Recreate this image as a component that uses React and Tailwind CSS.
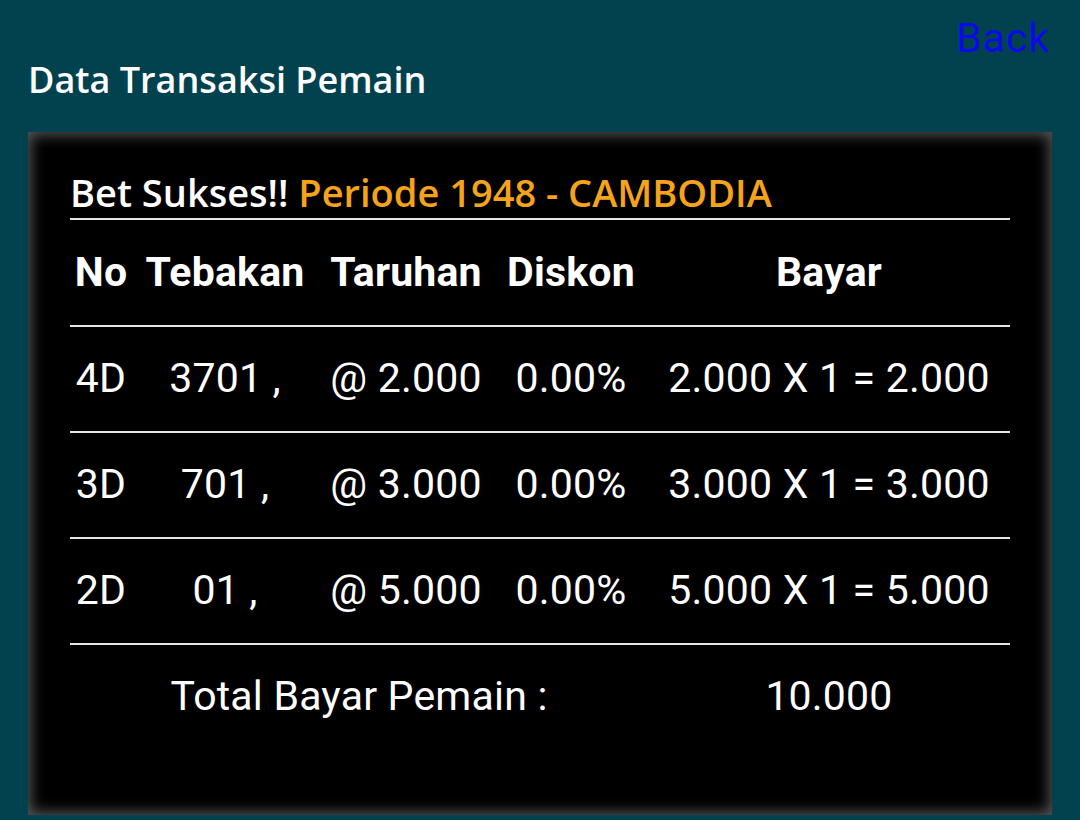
import React from 'react';

// rows of the bet receipt
const ROWS = [
    { no: '4D', tebakan: '3701 ,', taruhan: '@ 2.000', diskon: '0.00%', bayar: '2.000 X 1 = 2.000' },
    { no: '3D', tebakan: '701 ,', taruhan: '@ 3.000', diskon: '0.00%', bayar: '3.000 X 1 = 3.000' },
    { no: '2D', tebakan: '01 ,', taruhan: '@ 5.000', diskon: '0.00%', bayar: '5.000 X 1 = 5.000' },
];

const HEADERS = ['No', 'Tebakan', 'Taruhan', 'Diskon', 'Bayar'];

const App = () => {
    return (
        <div className="min-h-screen bg-[#02424f] font-['Roboto',sans-serif] overflow-hidden">
            <div className="flex justify-end pr-[30px] pt-[14px] h-[50px]">
                <a href="#" className="text-[41px] leading-[48px] text-[#0a0ae8] tracking-[1px]">Back</a>
            </div>

            <h1 className="ml-[28px] mt-[8px] text-[36px] leading-[44px] font-semibold text-white font-['Open_Sans',sans-serif]">
                Data Transaksi Pemain
            </h1>

            <div className="mx-[28px] mt-[30px] bg-black px-[42px] pt-[37px] pb-[67px] shadow-[inset_0_0_14px_3px_#555]">
                <div className="border-b-2 border-[#e6e6e6] pb-[3px] text-[38px] leading-[46px] font-semibold text-white font-['Open_Sans',sans-serif]">
                    Bet Sukses!! <span className="text-[#f5a31a]">Periode 1948 - CAMBODIA</span>
                </div>

                <table className="w-full table-fixed text-white text-[41px] tracking-[0.2px]">
                    <colgroup>
                        <col className="w-[62px]" />
                        <col className="w-[186px]" />
                        <col className="w-[176px]" />
                        <col className="w-[154px]" />
                        <col />
                    </colgroup>
                    <thead>
                        <tr className="border-b-2 border-[#e6e6e6]">
                            {HEADERS.map((h) => (
                                <th key={h} className="h-[106px] text-center font-bold whitespace-nowrap">{h}</th>
                            ))}
                        </tr>
                    </thead>
                    <tbody>
                        {ROWS.map((r) => (
                            <tr key={r.no} className="border-b-2 border-[#e6e6e6]">
                                <td className="h-[106px] text-center whitespace-nowrap">{r.no}</td>
                                <td className="text-center whitespace-nowrap">{r.tebakan}</td>
                                <td className="text-center whitespace-nowrap">{r.taruhan}</td>
                                <td className="text-center whitespace-nowrap">{r.diskon}</td>
                                <td className="text-center whitespace-nowrap">{r.bayar}</td>
                            </tr>
                        ))}
                        <tr>
                            <td colSpan={4} className="h-[104px] text-center whitespace-nowrap">Total Bayar Pemain :</td>
                            <td className="text-center">10.000</td>
                        </tr>
                    </tbody>
                </table>
            </div>
        </div>
    );
};

export default App;
